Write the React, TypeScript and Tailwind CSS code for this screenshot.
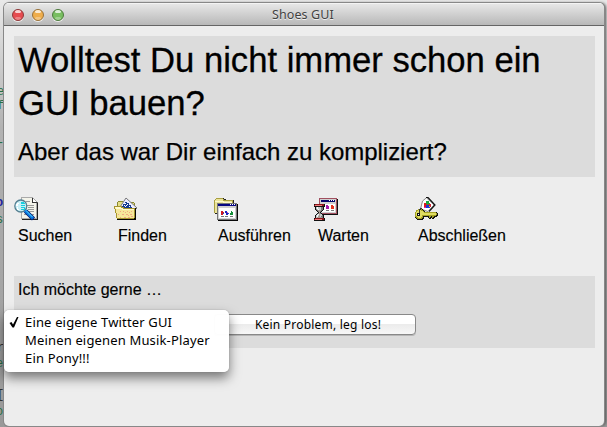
import type { ReactNode } from "react";

function Icon({ children }: { children: ReactNode }) {
  return (
    <svg width="24" height="24" viewBox="0 0 24 24" shapeRendering="crispEdges" className="block">
      {children}
    </svg>
  );
}

const palette: Record<string, string> = {
  k: "#111111",
  g: "#777777",
  l: "#c4cccc",
  w: "#f8ffff",
  r: "#8c1418",
  p: "#ee7c7c",
  b: "#a89a92",
  y: "#a5a224",
  Y: "#dfdc62",
};

function Pixels({ rows, top, left = 0 }: { rows: string[]; top: number; left?: number }) {
  return (
    <>
      {rows.flatMap((row, y) =>
        row.split("").map((c, x) =>
          palette[c] ? <rect key={`${x}-${y}`} x={x + left} y={y + top} width="1" height="1" fill={palette[c]} /> : null,
        ),
      )}
    </>
  );
}

const hourglass = [
  "krrrrrrrrrk",
  "rppppppprrk",
  "kkkkkkkkkkk",
  ".klwlllggk.",
  ".klwlllggk.",
  ".kglwllggk.",
  "..kgbbbgk..",
  "...kgbgk...",
  "....kbk....",
  "...kgbgk...",
  "..klwbllk..",
  ".klwlbllgk.",
  ".klwbblggk.",
  ".klbbbbbgk.",
  "krrrrrrrrrk",
  "rppppppprrk",
  "kkkkkkkkkkk",
];

const key = [
  "...yyyyk...............",
  ".yyYYYyyk..............",
  ".yYYYYYYyk.............",
  "yYYYYYYYYyyyyyyyyyyyyk.",
  "yYkkkYYYYYYYYYYYYYYYYyk",
  "yYkwkYYYYYYYYYYYYYYYYyk",
  "yYkkkYYyyyyyyyyyyyyyykk",
  "yyYYYYYykkkkkkyykyykkk.",
  "kyyYYYyyk....kykkykk...",
  ".kyyyyykk.....kk.kk....",
  "..kkkkkk...............",
];

function SearchIcon() {
  return (
    <Icon>
      <path d="M8 1H19L24 6V23H8Z" fill="#555" />
      <path d="M7 0H18L23 5V22H7Z" fill="#aaa" />
      <path d="M8 1H18V6H22V21H8Z" fill="#f4f4ea" />
      <path d="M18 1L22 5H18Z" fill="#fff" />
      <path d="M18.5 1V5.5H23" fill="none" stroke="#333" />
      <path d="M23.5 6V22.5H8" fill="none" stroke="#222" />
      <path d="M12 4.5H16M13 8.5H20M14 10.5H20M14 12.5H20M15 14.5H20M10 17.5H13M18 17.5H20" stroke="#999" />
      <circle cx="6.8" cy="9" r="6" fill="#c9f0f7" stroke="#557f91" strokeWidth="1.3" shapeRendering="auto" />
      <path d="M7 5h3v1h1v7H7v-1h3v-1H7v-1h4V9H7V8h4V7H7Z" fill="#16cfdf" />
      <path d="M3 6h2v1H4v2H2V7h1ZM3 10h1v2h1v1H3Z" fill="#fff" />
      <g shapeRendering="auto">
        <path d="M11.5 14L19.5 22" stroke="#001e75" strokeWidth="4.4" />
        <path d="M11 13.5L19 21.5" stroke="#087ae0" strokeWidth="2.8" />
        <path d="M12 13.5L18.5 20" stroke="#59d8ff" strokeWidth="1" />
      </g>
    </Icon>
  );
}

function FindIcon() {
  return (
    <Icon>
      <path d="M3 5H4V4H9V5H20V6H21V22H3Z" fill="#8a8830" />
      <path d="M4 5H9V6H20V14H4Z" fill="#e4dd84" />
      <path d="M12 1L23 11L21 13L6 10Z" fill="#eef" shapeRendering="auto" stroke="#777" />
      <path d="M12 5h1v1h2v2h2v2h1v1H7V9h2V7h2V5h1" fill="#173b91" />
      <path d="M11 6h1v1h-1M13 7h1v1h-1M10 8h1v1h-1M12 8h1v1h-1M15 9h1v1h-1M11 9h1v1h-1" fill="#fff" />
      <path d="M20 11H22V23H3V22H20Z" fill="#080808" />
      <path d="M0 9H8V10H10V11H21V21H20V22H3V21H2V16H1V12H0Z" fill="#a6952e" />
      <path d="M1 10H7V11H9V12H20V21H3V16H2V12H1Z" fill="#f5e79a" />
      <path d="M1 10H7V11H9V12H20V13H8V12H2V11H1Z" fill="#fffacf" />
      <path d="M6 14h1v1H6Zm3 0h1v1H9Zm4 0h1v1h-1Zm4 0h1v1h-1ZM4 17h1v1H4Zm4 0h2v1H8Zm4 0h2v1h-2Zm4 0h2v1h-2ZM6 20h1v1H6Zm4 0h2v1h-2Zm4 0h2v1h-2ZM11 15h1v1h-1Zm4 0h1v1h-1Zm-1 4h1v-1h-1Zm3 0h2v1h-2Z" fill="#efa884" />
    </Icon>
  );
}

function RunIcon() {
  return (
    <Icon>
      <path d="M2 1H10V2H12V3H20V17H1V3H2Z" fill="#222" />
      <path d="M0 3H1V2H2V1H9V2H10V3H19V16H0Z" fill="#a99f41" />
      <path d="M1 3H2V2H9V4H18V16H1Z" fill="#ebe49a" />
      <path d="M1 4.5H9L10 5.5H18" fill="none" stroke="#fffac9" />
      <path d="M4 7H24V24H4Z" fill="#080808" />
      <path d="M3 6H23V23H3Z" fill="#777" />
      <path d="M4 7H22V22H4Z" fill="#d0d0d0" />
      <path d="M4 7H22V9H4Z" fill="#070783" />
      <path d="M16 7h1v1h-1M18 7h1v1h-1M20 7h1v1h-1" fill="#fff" />
      <path d="M5 11H21V21H5Z" fill="#fff" />
      <path d="M7 14h2v1h1v2H9v1H7Z" fill="#ce1b23" />
      <path d="M9 16h1v1H9ZM14 16h1v1h-1Z" fill="#1d43d6" />
      <path d="M11 14h2v1h1v3h-2v-2h-1Z" fill="#1e25bd" />
      <path d="M13 15h1v1h-1Z" fill="#d33bb4" />
      <path d="M17 14h1v1h1v3h-3v-2h1Z" fill="#139039" />
      <path d="M7 19.5h3M11 19.5h3M16 19.5h3" stroke="#777" />
    </Icon>
  );
}

function WaitIcon() {
  return (
    <Icon>
      <path d="M6 2H24V18H6Z" fill="#111" />
      <path d="M5 1H23V17H5Z" fill="#a15060" />
      <path d="M6 2H22V16H6Z" fill="#d0d0d0" />
      <path d="M7 3H21V5H7Z" fill="#05056b" />
      <path d="M15 3h1v1h-1M17 3h1v1h-1M19 3h1v1h-1" fill="#fff" />
      <path d="M8 7H21V15H8Z" fill="#fff" />
      <path d="M12 8h2v1h1v3h-3Z" fill="#a71aaa" />
      <path d="M17 8h2v1h1v3h-3Z" fill="#e63520" />
      <path d="M12 13.5h3M17 13.5h3" stroke="#777" />
      <Pixels rows={hourglass} top={7} />
    </Icon>
  );
}

function LockIcon() {
  return (
    <Icon>
      <path d="M12.5 0.8L20 8L14 14.5L6.5 12L8.5 4Z" fill="#fff" stroke="#888" shapeRendering="auto" />
      <path d="M12 0.5L14 0.5L21 8L15 14.5" fill="none" stroke="#111" strokeWidth="1.2" shapeRendering="auto" />
      <path d="M12 4h3v2h1v2h-4Z" fill="#16a73e" />
      <path d="M10 6h2v1h1v3h-3Z" fill="#db171f" />
      <path d="M14 7h3v3h-3Z" fill="#cf2432" />
      <path d="M12 8h3v2h1v1h-4Z" fill="#1638d6" />
      <path d="M15 9h1v1h-1Z" fill="#e0c917" />
      <path d="M10 10h2v1h-2Z" fill="#d61cb0" />
      <Pixels rows={key} top={12} left={1} />
      <path d="M5.5 16V12.5H6.5V11.5H7.5" fill="none" stroke="#333" />
    </Icon>
  );
}

const actions = [
  { label: "Suchen", icon: <SearchIcon /> },
  { label: "Finden", icon: <FindIcon /> },
  { label: "Ausführen", icon: <RunIcon /> },
  { label: "Warten", icon: <WaitIcon /> },
  { label: "Abschließen", icon: <LockIcon /> },
];

function TrafficLight({ tone }: { tone: string }) {
  return (
    <span className={`relative block size-3 overflow-hidden rounded-full border shadow-[0_1px_0_#eee] ${tone}`}>
      <span className="absolute left-[2px] top-0 h-[3px] w-[6px] rounded-full bg-white/75" />
      <span className="absolute bottom-0 left-[2px] h-[3px] w-[6px] rounded-full bg-white/30" />
    </span>
  );
}

export default function App() {
  return (
    <div className="relative h-[427px] w-[607px] overflow-hidden bg-linear-to-b from-[#e9e9e9] via-[#b2b2b2] via-30% to-[#999] pl-1 pt-[3px] font-['Liberation_Sans',Arial,sans-serif] text-black">
      <div className="absolute left-0 top-0 h-full w-1 overflow-hidden font-['Liberation_Mono',monospace] text-[12px] leading-none">
        <span className="absolute -left-[3px] top-[86px] text-[#267047]">e</span>
        <span className="absolute -left-[3px] top-[100px] text-[#267047]">f</span>
        <span className="absolute -left-[3px] top-[137px] text-[#267047]">-</span>
        <span className="absolute -left-[4px] top-[197px] font-bold text-[#2020a0]">o</span>
        <span className="absolute -left-[4px] top-[214px] text-[#267047]">s</span>
        <span className="absolute -left-[3px] top-[342px] text-[#333]">r</span>
        <span className="absolute -left-[4px] top-[358px] text-[#267047]">e</span>
        <span className="absolute -left-[3px] top-[389px] text-[#333]">[</span>
        <span className="absolute -left-[4px] top-[406px] text-[#267047]">o</span>
      </div>
      <main className="relative flex h-[423px] w-[600px] flex-col overflow-hidden rounded-[5px] bg-[#ededed] shadow-[0_0_0_1px_#888,2px_0_3px_#555]">
        <header className="relative flex h-[23px] shrink-0 items-center border-b border-[#656565] bg-linear-to-b from-[#e9e9e9] to-[#b8b8b8] pl-2 pt-px shadow-[inset_0_1px_0_#f4f4f4]">
          <div className="flex gap-2">
            <TrafficLight tone="border-[#8c3839] bg-[#e64b50]" />
            <TrafficLight tone="border-[#96703a] bg-[#efad4b]" />
            <TrafficLight tone="border-[#4c793d] bg-[#78be60]" />
          </div>
          <h1 className="absolute left-[268px] top-[3px] whitespace-nowrap font-['Noto_Sans',sans-serif] text-[12.5px] leading-[18px] tracking-[0.1px] text-[#414141] [text-shadow:0_1px_0_#eee]">Shoes GUI</h1>
        </header>
        <section className="ml-[10px] mt-[10px] h-[141px] w-[581px] shrink-0 bg-[#dcdcdc] px-1 pt-[3px]">
          <h2 className="whitespace-nowrap text-[34.67px] leading-[43px] tracking-[-0.02px] [-webkit-text-stroke:0.3px_black]">Wolltest Du nicht immer schon ein<br />GUI bauen?</h2>
          <p className="mt-3 whitespace-nowrap text-[24px] leading-[30px] tracking-[-0.02px] [-webkit-text-stroke:0.25px_black]">Aber das war Dir einfach zu kompliziert?</p>
        </section>
        <nav className="ml-[10px] mt-5 flex h-[79px] shrink-0">
          {actions.map(({ label, icon }) => (
            <div key={label} className="w-[100px]">
              {icon}
              <span className="mt-[5px] block whitespace-nowrap pl-1 text-[16px] leading-5 tracking-[-0.02px] [-webkit-text-stroke:0.15px_black]">{label}</span>
            </div>
          ))}
        </nav>
        <section className="ml-[10px] h-[72px] w-[581px] shrink-0 bg-[#dcdcdc] px-1 pt-1">
          <p className="text-[16px] leading-5 [-webkit-text-stroke:0.15px_black]">Ich möchte gerne …</p>
          <button className="ml-[196px] mt-[14px] block h-[21px] w-[202px] rounded-[4px] border border-[#888] bg-linear-to-b from-white from-45% via-[#ececec] via-50% to-[#f7f7f7] pl-[6px] text-center font-['Noto_Sans',sans-serif] text-[12px] leading-[17px] tracking-[0.21px] shadow-[0_1px_0_#b7b7b7]">Kein Problem, leg los!</button>
        </section>
      </main>
      <div role="listbox" className="absolute left-1 top-[310px] h-[62px] w-[225px] rounded-[5px] bg-white/98 pt-[3px] font-['Noto_Sans',sans-serif] text-[13px] leading-[18px] tracking-[0.16px] shadow-[0_0_1px_#777,0_6px_12px_rgba(0,0,0,0.5)]">
        <div className="flex pl-[5px]"><svg className="mt-1 h-[11px] w-4 shrink-0" viewBox="0 0 16 11"><path d="M0.5 6L2.5 5L4 7.5L8 0H9.5L5 10.5H3.5Z" /></svg><span className="whitespace-nowrap">Eine eigene Twitter GUI</span></div>
        <div className="whitespace-nowrap pl-[21px]">Meinen eigenen Musik-Player</div>
        <div className="whitespace-nowrap pl-[21px]">Ein Pony!!!</div>
      </div>
    </div>
  );
}
